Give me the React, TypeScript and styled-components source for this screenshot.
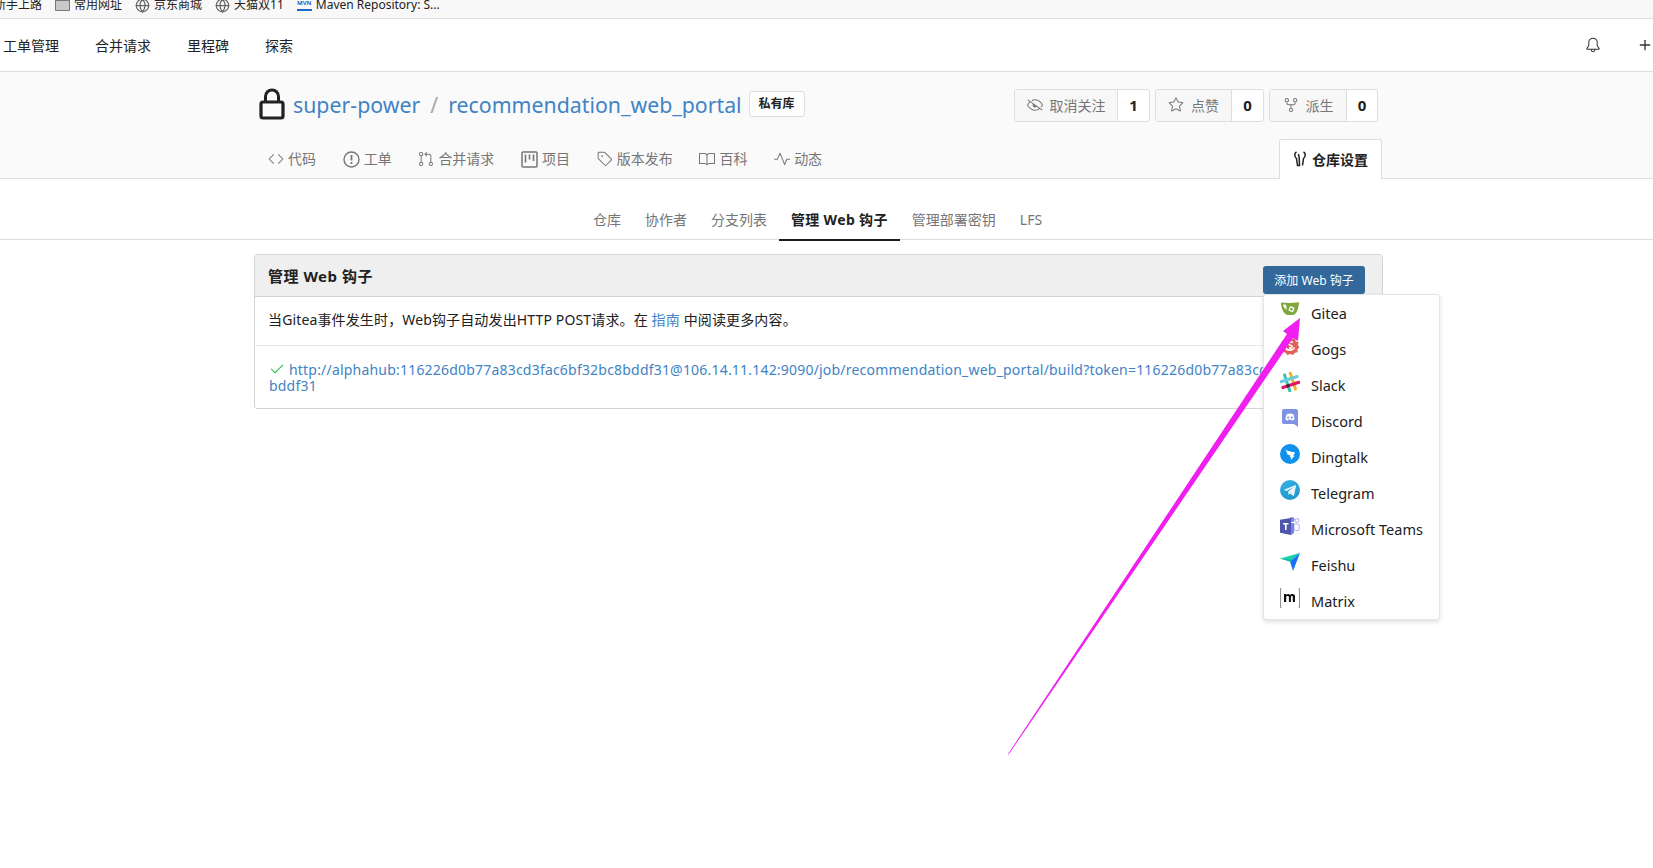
import React from 'react';
import styled, { createGlobalStyle } from 'styled-components';
import {
  GoBell, GoBook, GoCheck, GoCode, GoEyeClosed, GoGitPullRequest,
  GoPulse, GoRepoForked, GoStar, GoTag,
} from 'react-icons/go';
import { Globe, Plus } from 'lucide-react';

const GlobalStyle = createGlobalStyle`
  html, body { margin: 0; padding: 0; background: #fff; }
  body {
    font-family: "Noto Sans", "Noto Sans CJK SC", sans-serif;
    font-size: 14px;
    color: #212121;
    overflow: hidden;
  }
`;

const Page = styled.div`
  position: relative;
  width: 1653px;
  height: 868px;
  overflow: hidden;
`;

const BookmarkBar = styled.div`
  height: 18px;
  background: #f8f8f8;
  border-bottom: 1px solid #dedede;
  overflow: hidden;
`;

const BookmarkRow = styled.div`
  display: flex;
  align-items: center;
  gap: 13px;
  margin: -3px 0 0 -6px;
  height: 16px;
  font-size: 12px;
  line-height: 16px;
  color: #222;
  white-space: nowrap;
`;

const Bookmark = styled.span`
  display: inline-flex;
  align-items: center;
  gap: 4px;
`;

const FolderIcon = styled.span`
  width: 15px;
  height: 12px;
  box-sizing: border-box;
  background: #c8c8c8;
  border: 1px solid #777;
  border-top-width: 2px;
  border-radius: 1px;
`;

const MvnIcon = styled.span`
  width: 15px;
  height: 12px;
  font-size: 6px;
  line-height: 9px;
  font-weight: 700;
  color: #1b6ac6;
  border-bottom: 2px solid #1b6ac6;
  box-sizing: border-box;
  text-align: center;
  overflow: hidden;
`;

const NavBar = styled.div`
  display: flex;
  align-items: center;
  justify-content: space-between;
  height: 52px;
  border-bottom: 1px solid #dedede;
  padding: 0 0 0 3px;
`;

const NavLinks = styled.div`
  display: flex;
  gap: 36px;
`;

const NavLink = styled.a`
  font-size: 14px;
  color: #212121;
`;

const NavIcons = styled.div`
  display: flex;
  align-items: center;
  gap: 36px;
  color: #333;
`;

const RepoHeader = styled.div`
  background: #fafafa;
  height: 106px;
  border-bottom: 1px solid #dedede;
  box-sizing: content-box;
`;

const Container = styled.div`
  position: relative;
  width: 1129px;
  margin-left: 254px;
`;

const TitleRow = styled.div`
  display: flex;
  align-items: center;
  justify-content: space-between;
  height: 34px;
  padding: 15px 5px 0 5px;
  box-sizing: content-box;
`;

const RepoTitle = styled.div`
  display: flex;
  align-items: center;
  font-size: 21.3px;
  color: #4183c4;
`;

const LockIcon = styled.svg`
  width: 26px;
  height: 32px;
  margin-right: 8px;
`;

const Slash = styled.span`
  color: #a8a8a8;
  margin: 0 10px;
`;

const PrivateBadge = styled.span`
  font-size: 12px;
  font-weight: 700;
  color: #212121;
  background: #fff;
  border: 1px solid #dedede;
  border-radius: 3px;
  padding: 1px 9px;
  line-height: 22px;
  margin-left: 7px;
`;

const RepoButtons = styled.div`
  display: flex;
  gap: 5px;
  margin-top: 2px;
`;

const ButtonGroup = styled.div`
  display: flex;
  height: 33px;
  box-sizing: border-box;
  border: 1px solid #dedede;
  border-radius: 3px;
  background: #fff;
  overflow: hidden;
`;

const GroupLabel = styled.span<{ $width: number }>`
  display: flex;
  align-items: center;
  justify-content: center;
  gap: 7px;
  width: ${p => p.$width}px;
  background: #f7f7f7;
  border-right: 1px solid #dedede;
  color: #767676;
  font-size: 14px;
`;

const GroupCount = styled.span<{ $width: number }>`
  display: flex;
  align-items: center;
  justify-content: center;
  width: ${p => p.$width}px;
  font-weight: 700;
  font-size: 15px;
  color: #212121;
`;

const RepoTabs = styled.div`
  display: flex;
  align-items: flex-end;
  justify-content: space-between;
  height: 40px;
  margin-top: 17px;
  padding-left: 14px;
`;

const TabGroup = styled.div`
  display: flex;
  gap: 26.7px;
  height: 40px;
  padding-top: 2px;
  box-sizing: border-box;
  align-items: center;
`;

const RepoTab = styled.a`
  display: flex;
  align-items: center;
  gap: 4px;
  font-size: 14px;
  color: #767676;
  line-height: 20px;
`;

const OutlineIcon = styled.svg`
  width: 17px;
  height: 17px;
  flex: none;
`;

const SettingsTab = styled.a`
  display: flex;
  align-items: center;
  justify-content: center;
  gap: 5px;
  width: 103px;
  height: 40px;
  box-sizing: border-box;
  margin-right: 1px;
  margin-bottom: -1px;
  padding-bottom: 2px;
  background: #fff;
  border: 1px solid #dedede;
  border-bottom: none;
  border-radius: 3px 3px 0 0;
  font-weight: 700;
  font-size: 14px;
  color: #212121;
`;

const SubMenuLine = styled.div`
  height: 60px;
  border-bottom: 1px solid #dedede;
  box-sizing: content-box;
`;

const SubMenu = styled.div`
  display: flex;
  justify-content: center;
  margin-right: 18px;
`;

const SubMenuItem = styled.a<{ $active?: boolean }>`
  display: block;
  height: 62px;
  box-sizing: border-box;
  padding: 31px 12px 0;
  font-size: 14px;
  line-height: 20px;
  letter-spacing: ${p => (p.$active ? '0.35px' : '0')};
  color: ${p => (p.$active ? '#212121' : '#767676')};
  font-weight: ${p => (p.$active ? 700 : 400)};
  border-bottom: 2px solid ${p => (p.$active ? '#1b1c1d' : 'transparent')};
`;

const HookBox = styled.div`
  margin-top: 14px;
  border: 1px solid #d4d4d5;
  border-radius: 3px;
`;

const BoxHeader = styled.div`
  display: flex;
  align-items: center;
  justify-content: space-between;
  height: 41px;
  padding: 0 17px 0 13px;
  background: #efefef;
  border-bottom: 1px solid #d4d4d5;
`;

const BoxTitle = styled.h4`
  margin: 0;
  font-size: 15px;
  font-weight: 700;
  letter-spacing: 0.5px;
  color: #212121;
`;

const AddButton = styled.button`
  position: relative;
  top: 4px;
  width: 102px;
  height: 28px;
  padding: 0;
  border: none;
  border-radius: 3px;
  background: #33689b;
  color: #fff;
  font-family: inherit;
  font-size: 12px;
`;

const BoxRow = styled.div`
  padding: 12px 13px 14px;
  line-height: 22px;
  font-size: 14px;
  letter-spacing: 0.14px;
  color: #212121;
  border-bottom: 1px solid #e8e8e8;
`;

const UrlRow = styled.div`
  padding: 15px 21px 14px 14px;
  line-height: 16px;
  font-size: 14px;
  letter-spacing: 0.2px;
  word-break: break-all;
`;

const BlueLink = styled.a`
  color: #4183c4;
`;

const CheckMark = styled(GoCheck)`
  color: #21ba45;
  vertical-align: -2px;
  margin-right: 4px;
  width: 16px;
  height: 16px;
`;

const DropMenu = styled.div`
  position: absolute;
  top: 40px;
  right: -57px;
  width: 177px;
  height: 326px;
  box-sizing: border-box;
  background: #fff;
  border: 1px solid #e4e4e4;
  border-radius: 3px;
  box-shadow: 0 2px 4px rgba(34, 36, 38, 0.14);
  z-index: 2;
`;

const DropItem = styled.div`
  display: flex;
  align-items: flex-start;
  gap: 11px;
  height: 36px;
  padding: 7px 0 0 16px;
  font-size: 14.500px;
  line-height: 22px;
  color: #212121;
  box-sizing: border-box;
`;

const ItemIcon = styled.svg`
  width: 20px;
  height: 20px;
  flex: none;
  margin-top: -2px;
`;

const ArrowLayer = styled.svg`
  position: absolute;
  left: 0;
  top: 0;
  z-index: 3;
  pointer-events: none;
`;

const IssueIcon = () => (
  <OutlineIcon viewBox="0 0 17 17">
    <circle cx="8.500" cy="8.500" r="7.500" fill="none" stroke="#767676" strokeWidth="1.400" />
    <path d="M8.500 4v5.500M8.500 11v2" stroke="#767676" strokeWidth="1.800" />
  </OutlineIcon>
);

const ProjectIcon = () => (
  <OutlineIcon viewBox="0 0 17 17">
    <rect x="1" y="1" width="15" height="15" rx="1" fill="none" stroke="#767676" strokeWidth="1.500" />
    <path d="M4.500 3.500v8M8.500 3.500v5M12.500 3.500v6.500" stroke="#767676" strokeWidth="1.600" />
  </OutlineIcon>
);

const BOOKMARKS = ['京东商城', '天猫双11'];
const REPO_TABS = [
  { icon: <GoCode size={16} />, label: '代码' },
  { icon: <IssueIcon />, label: '工单' },
  { icon: <GoGitPullRequest size={16} />, label: '合并请求' },
  { icon: <ProjectIcon />, label: '项目' },
  { icon: <GoTag size={16} />, label: '版本发布' },
  { icon: <GoBook size={16} />, label: '百科' },
  { icon: <GoPulse size={16} />, label: '动态' },
];
const SUB_MENU = ['仓库', '协作者', '分支列表', '管理 Web 钩子', '管理部署密钥', 'LFS'];

const GiteaIcon = () => (
  <ItemIcon viewBox="0 0 20 20">
    <path d="M1 2.500c5 .6 12 .6 18-.3-.3 5.500-2 12-6 12.800H8C4 15 .8 8 1 2.500z" fill="#7fa83c" />
    <path d="M3 4.500l3 .2.800 5C4.500 9 3.300 6.500 3 4.500z" fill="#fff" />
    <rect x="9" y="6.500" width="5" height="5" rx="1" transform="rotate(25 11 9)" fill="#fff" />
    <rect x="10.300" y="7.800" width="2.400" height="2.400" transform="rotate(25 11 9)" fill="#7fa83c" />
  </ItemIcon>
);

const GogsIcon = () => (
  <ItemIcon viewBox="0 0 20 20">
    <path d="M10 1l2 2 3-.6.800 2.800 2.800 1-.6 3 1.500 2-2 2 .2 3-3 .5-1.500 2.400-3-1-3 1-1.500-2.400-2.800-.8.200-3L.700 11l1.300-2.700-.5-3 2.800-.8L5.500 2l2.700.4z" fill="#e0605a" />
    <path d="M7 6h6M10 6c-3 1-1 3 1 3.500s1 3-2 2.500M5.500 11.500c1 3.500 7.500 3.500 9 0" stroke="#fff" strokeWidth="1.600" fill="none" />
  </ItemIcon>
);

const SlackIcon = () => (
  <ItemIcon viewBox="0 0 20 20">
    <g transform="rotate(-18 10 10)" strokeWidth="3" strokeLinecap="round">
      <path d="M7 1.500v17" stroke="#36c5ab" />
      <path d="M13 1.500v17" stroke="#ecb22e" />
      <path d="M1.500 7h17" stroke="#6ecadc" />
      <path d="M1.500 13h17" stroke="#e01563" />
      <rect x="5.500" y="11.500" width="3" height="3" fill="#3e2c3a" stroke="none" />
    </g>
  </ItemIcon>
);

const DiscordIcon = () => (
  <ItemIcon viewBox="0 0 20 20">
    <path d="M4 1h12a2 2 0 0 1 2 2v16l-4-3H4a2 2 0 0 1-2-2V3a2 2 0 0 1 2-2z" fill="#7f92e4" />
    <path d="M5.500 11.500c0-3 1-5 1.500-5.500 2-.8 4-.8 6 0 .5.500 1.500 2.500 1.500 5.500-1 .8-2 1-2.500 1l-.7-1c-1 .3-2 .3-3 0l-.7 1c-.5 0-1.500-.2-2.100-1z" fill="#fff" />
    <circle cx="8.200" cy="9.500" r="1.100" fill="#7f92e4" />
    <circle cx="11.800" cy="9.500" r="1.100" fill="#7f92e4" />
  </ItemIcon>
);

const DingtalkIcon = () => (
  <ItemIcon viewBox="0 0 20 20">
    <circle cx="10" cy="10" r="10" fill="#0f8fee" />
    <path d="M4.500 5.500c3 1.500 7 2.500 10.500 2.800-.3 1.200-1.300 2.800-1.700 3.400h1.500l-4.300 4.500.8-3h-1.600l.6-1.700c-2-.4-3.500-1.600-3.800-2.500l1.600.2c-1.500-1-2.400-2.300-2.600-3.700z" fill="#fff" />
  </ItemIcon>
);

const TelegramIcon = () => (
  <ItemIcon viewBox="0 0 20 20">
    <defs>
      <linearGradient id="tg" x1="0.300" y1="0" x2="0.700" y2="1">
        <stop offset="0" stopColor="#37aee2" />
        <stop offset="1" stopColor="#1e96c8" />
      </linearGradient>
    </defs>
    <circle cx="10" cy="10" r="10" fill="url(#tg)" />
    <path d="M3.800 9.800l11.400-4.500c.6-.2 1 .1.800 1l-1.900 9c-.1.600-.5.800-1 .5l-3-2.200-1.500 1.400-.5-3.300 5.300-4.800-6.700 4.200z" fill="#e8f4fa" />
  </ItemIcon>
);

const TeamsIcon = () => (
  <ItemIcon viewBox="0 0 20 20">
    <circle cx="12" cy="3.500" r="2.500" fill="#7b83eb" />
    <circle cx="17" cy="4.500" r="1.900" fill="none" stroke="#a6abe8" strokeWidth="1" />
    <rect x="14" y="8" width="5.200" height="6.500" rx="1.500" fill="none" stroke="#a6abe8" strokeWidth="1" />
    <path d="M9 7h5v9c0 1.500-1 2.500-2.500 2.500S9 17 9 16z" fill="#7b83eb" />
    <path d="M0 3.800L11 2v17L0 16.800z" fill="#4f56ac" />
    <path d="M3 7h5.500v1.500H6.600V14H5V8.500H3z" fill="#fff" />
  </ItemIcon>
);

const FeishuIcon = () => (
  <ItemIcon viewBox="0 0 20 20">
    <defs>
      <linearGradient id="fs" x1="0" y1="0" x2="1" y2="0">
        <stop offset="0" stopColor="#19e0b0" />
        <stop offset="1" stopColor="#10c4a5" />
      </linearGradient>
    </defs>
    <path d="M0 6.500L20 1 10 9.500z" fill="url(#fs)" />
    <path d="M20 1L13 19l-3-9.500z" fill="#1473f2" />
    <path d="M0 6.500L10 9.500l2-1.800z" fill="#0fb9a0" />
  </ItemIcon>
);

const MatrixIcon = () => (
  <ItemIcon viewBox="0 0 20 20">
    <path d="M1.500 .500H.500v19h1M18.500 .500h1v19h-1" fill="none" stroke="#777" strokeWidth=".8" />
    <path d="M4 6h2.200v1c1-1.300 3-1.500 3.800 0 1-1.500 5-1.600 5 1.200V14h-2.200V9c0-1.500-1.900-1.500-1.900.2V14H8.900V9c0-1.500-2.700-1.500-2.700.2V14H4z" fill="#111" />
  </ItemIcon>
);

const HOOK_TYPES = [
  { name: 'Gitea', icon: <GiteaIcon /> },
  { name: 'Gogs', icon: <GogsIcon /> },
  { name: 'Slack', icon: <SlackIcon /> },
  { name: 'Discord', icon: <DiscordIcon /> },
  { name: 'Dingtalk', icon: <DingtalkIcon /> },
  { name: 'Telegram', icon: <TelegramIcon /> },
  { name: 'Microsoft Teams', icon: <TeamsIcon /> },
  { name: 'Feishu', icon: <FeishuIcon /> },
  { name: 'Matrix', icon: <MatrixIcon /> },
];

const App: React.FC = () => (
  <Page>
    <GlobalStyle />
    <BookmarkBar>
      <BookmarkRow>
        <Bookmark>新手上路</Bookmark>
        <Bookmark><FolderIcon />常用网址</Bookmark>
        {BOOKMARKS.map(b => (
          <Bookmark key={b}><Globe size={15} color="#666" />{b}</Bookmark>
        ))}
        <Bookmark><MvnIcon>MVN</MvnIcon>Maven Repository: S...</Bookmark>
      </BookmarkRow>
    </BookmarkBar>

    <NavBar>
      <NavLinks>
        <NavLink>工单管理</NavLink>
        <NavLink>合并请求</NavLink>
        <NavLink>里程碑</NavLink>
        <NavLink>探索</NavLink>
      </NavLinks>
      <NavIcons>
        <GoBell size={16} />
        <Plus size={16} strokeWidth={2} />
      </NavIcons>
    </NavBar>

    <RepoHeader>
      <Container>
        <TitleRow>
          <RepoTitle>
            <LockIcon viewBox="0 0 26 32">
              <path d="M6.500 14V8.500a6.500 6.500 0 0 1 13 0V14" fill="none" stroke="#212121" strokeWidth="3" />
              <rect x="2" y="14" width="22" height="16" rx="2" fill="none" stroke="#212121" strokeWidth="3.200" />
            </LockIcon>
            <span>super-power</span>
            <Slash>/</Slash>
            <span>recommendation_web_portal</span>
            <PrivateBadge>私有库</PrivateBadge>
          </RepoTitle>
          <RepoButtons>
            <ButtonGroup>
              <GroupLabel $width={102}><GoEyeClosed size={16} />取消关注</GroupLabel>
              <GroupCount $width={31}>1</GroupCount>
            </ButtonGroup>
            <ButtonGroup>
              <GroupLabel $width={75}><GoStar size={16} />点赞</GroupLabel>
              <GroupCount $width={31}>0</GroupCount>
            </ButtonGroup>
            <ButtonGroup>
              <GroupLabel $width={76}><GoRepoForked size={16} />派生</GroupLabel>
              <GroupCount $width={30}>0</GroupCount>
            </ButtonGroup>
          </RepoButtons>
        </TitleRow>
        <RepoTabs>
          <TabGroup>
            {REPO_TABS.map(t => (
              <RepoTab key={t.label}>{t.icon}{t.label}</RepoTab>
            ))}
          </TabGroup>
          <SettingsTab>
            <svg width="14" height="16" viewBox="0 0 14 16" fill="none" stroke="#212121" strokeWidth="1.500">
              <path d="M3.500 1C1.500 2 1 5.500 3.500 7.500L4.500 14.500H6.500L6.200 6.500C5.800 5.500 5.500 4.500 5.500 3M10.500 1C12.500 2 13 5.500 10.500 7.500L9.500 14.500" />
            </svg>
            仓库设置
          </SettingsTab>
        </RepoTabs>
      </Container>
    </RepoHeader>

    <SubMenuLine>
      <SubMenu>
        {SUB_MENU.map(s => (
          <SubMenuItem key={s} $active={s === '管理 Web 钩子'}>{s}</SubMenuItem>
        ))}
      </SubMenu>
    </SubMenuLine>

    <Container>
      <HookBox>
        <BoxHeader>
          <BoxTitle>管理 Web 钩子</BoxTitle>
          <AddButton>添加 Web 钩子</AddButton>
        </BoxHeader>
        <BoxRow>
          当Gitea事件发生时，Web钩子自动发出HTTP POST请求。在 <BlueLink>指南</BlueLink> 中阅读更多内容。
        </BoxRow>
        <UrlRow>
          <CheckMark />
          <BlueLink>http://alphahub:116226d0b77a83cd3fac6bf32bc8bddf31@106.14.11.142:9090/job/recommendation_web_portal/build?token=116226d0b77a83cd3fac6bf32bc8bddf31</BlueLink>
        </UrlRow>
      </HookBox>
      <DropMenu>
        {HOOK_TYPES.map(h => (
          <DropItem key={h.name}>{h.icon}{h.name}</DropItem>
        ))}
      </DropMenu>
    </Container>

    <ArrowLayer width="1653" height="868" viewBox="0 0 1653 868">
      <polygon points="1008,754 1287,334 1283,331 1300,318 1298,341 1293,338 1008.600,754.500" fill="#f01ff0" />
    </ArrowLayer>
  </Page>
);

export default App;
